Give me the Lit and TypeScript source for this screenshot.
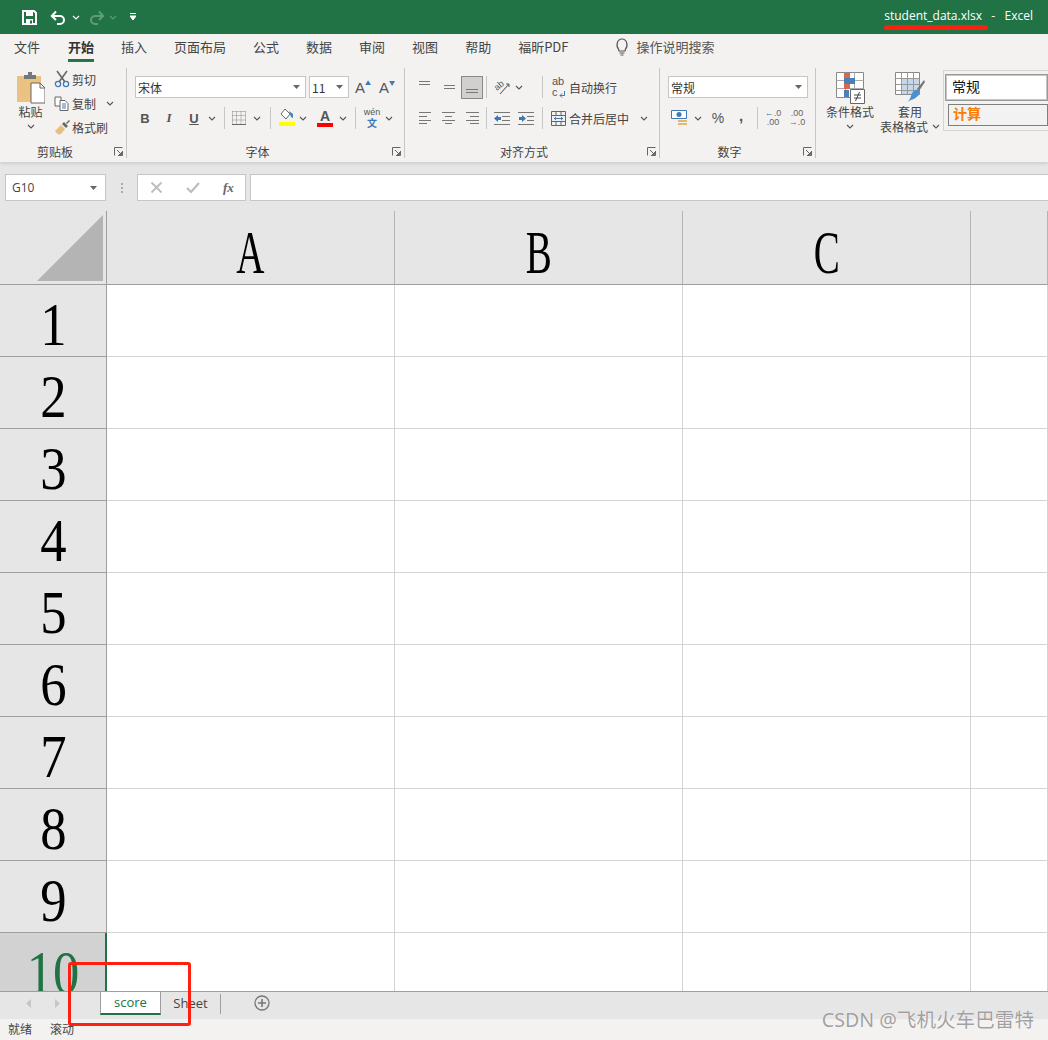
import { LitElement, html, css, svg } from "lit";
import { customElement } from "lit/decorators.js";

const ic = (w: number, h: number, body: unknown) =>
  html`<svg class="ic" width=${w} height=${h} viewBox="0 0 ${w} ${h}">${body}</svg>`;
const chev = ic(8, 5, svg`<path d="M1 1l3 3 3-3" fill="none" stroke="#555" stroke-width="1.1"/>`);
const caret = ic(7, 4, svg`<path d="M0 0h7L3.500 4z" fill="#666"/>`);
const launcher = ic(9, 9, svg`<path d="M.5 8.500V.5h8M8.500 4v4.500H4M3 3l4.500 4.500M7.500 5v2.500H5" fill="none" stroke="#666" stroke-width="1"/>`);
const lines = (ys: [number, number, number][]) =>
  ic(16, 16, ys.map(([y, a, b]) => svg`<path d="M${a} ${y + .5}H${b}" stroke="#777" stroke-width="1"/>`));

const icons = {
  save: ic(15, 15, svg`<path d="M1 1h11l2 2v11H1z" fill="none" stroke="#fff" stroke-width="2"/><path d="M4 1h7v5H4zM4 9h7v5H4z" fill="#fff"/><path d="M8 10.500h2v3H8z" fill="#217346"/>`),
  undo: ic(16, 15, svg`<path d="M3 6h7a4 4 0 0 1 0 8H7M6 1.500L1.800 6 6 10" fill="none" stroke="#fff" stroke-width="2"/>`),
  redo: ic(16, 15, svg`<path d="M13 6H6a4 4 0 0 0 0 8h3M10 1.500L14.200 6 10 10" fill="none" stroke="#5e9c7c" stroke-width="2"/>`),
  cut: ic(16, 18, svg`<path d="M3 1l8 11M13 1L5 12" stroke="#666" stroke-width="1.600"/><circle cx="4" cy="14" r="2.600" fill="none" stroke="#3f79b5" stroke-width="1.300"/><circle cx="12" cy="14" r="2.600" fill="none" stroke="#3f79b5" stroke-width="1.300"/>`),
  copy: ic(16, 15, svg`<path d="M1 1h6v9H1z" fill="#fff" stroke="#666"/><path d="M6 4.500h5l3 3v7H6z" fill="#fff" stroke="#666"/><path d="M8 8h4M8 10h4M8 12h4" stroke="#3f79b5"/>`),
  brush: ic(17, 15, svg`<path d="M1 11l6-6 4 4-4 5-3 .5z" fill="#e6c07e"/><path d="M8 4l2-2 4 4-2 2z" fill="#666"/><path d="M12 3l3-3 1 1-3 3z" fill="#666"/>`),
  borders: ic(14, 14, svg`<path d="M.5.500h13M.5 4.500h13M.5 9h13M.5 13.500h13M.5.500v13M4.500.5v13M9 .5v13M13.500.5v13" fill="none" stroke="#888" stroke-dasharray="1 1"/><path d="M0 13.500h14" stroke="#666"/>`),
  fill: ic(18, 20, svg`<path d="M7 1l5 5-4 5-5-5z" fill="#fff" stroke="#666"/><path d="M11 3l4 3v4l-2-1z" fill="#4a7fb8"/><path d="M1 14h16v4H1z" fill="#ff0"/>`),
  bulb: ic(14, 18, svg`<path d="M3.500 11C1 8.500 1.500 1 7 1s6 7.500 3.500 10l-.5 2H4z" fill="none" stroke="#555" stroke-width="1.200"/><path d="M4.500 15h5M5.500 17h3" stroke="#555"/>`),
  orient: ic(18, 16, svg`<text x="4" y="12" transform="rotate(-40 4 12)" font-family="Liberation Sans" font-size="9" fill="#555">ab</text><path d="M7 15L16 5M16 5h-3M16 5v3" fill="none" stroke="#666" stroke-width="1.100"/>`),
  indL: ic(16, 13, svg`<path d="M0 .5h16M8 4.500h8M8 8.500h8M0 12.500h16" stroke="#777"/><path d="M0 6.500L4 3v2h3v3H4v2z" fill="#3f79b5"/>`),
  indR: ic(16, 13, svg`<path d="M0 .5h16M9 4.500h7M9 8.500h7M0 12.500h16" stroke="#777"/><path d="M8 6.500L4 3v2H1v3h3v2z" fill="#3f79b5"/>`),
  wrap: ic(7, 7, svg`<path d="M5.500 0v4.500H1M3 2.500L1 4.500l2 2" fill="none" stroke="#3f79b5"/>`),
  merge: ic(15, 15, svg`<path d="M.5.500h14v14H.5zM.5 4.500h14M.5 10.500h14M5 .5v4M10 .5v4M5 10.500v4M10 10.500v4" fill="none" stroke="#666"/><path d="M3 7.500h9" stroke="#3f79b5"/><path d="M3 7.500l2-2v4zM12 7.500l-2-2v4z" fill="#3f79b5"/>`),
  money: ic(18, 17, svg`<path d="M.5.500h15v8H.5z" fill="#fff" stroke="#3f79b5"/><circle cx="8" cy="4.500" r="2.500" fill="#3f79b5"/><path d="M7 10h9v2H7zM7 13h9v2H7z" fill="#e6b86e"/>`),
  cond: ic(29, 33, svg`<path d="M.5.500h27v25H.5z" fill="#fff" stroke="#888"/><path d="M.5 8.500h27M.5 16.500h27M9.500.5v25M18.500.5v25" stroke="#aaa"/><path d="M8 1h6v5H8zM8 12h6v5H8z" fill="#d9694a"/><path d="M8 6h11v6H8zM8 18h5v7H8z" fill="#4a7fb8"/><path d="M14.500 17.500h14v14h-14z" fill="#fff" stroke="#666"/><path d="M18 23h7M18 26h7M23.500 20l-4 9" fill="none" stroke="#444"/>`),
  table: ic(30, 33, svg`<path d="M.5.500h24v22H.5z" fill="#fff" stroke="#888"/><path d="M6 7h18v15H6z" fill="#c5d7eb"/><path d="M.5 6.500h24M.5 12.500h24M.5 18.500h24M6.500.5v22M12.500.5v22M18.500.5v22" stroke="#999"/><path d="M29 8l-7 9 2 2 6-9z" fill="#777"/><path d="M16 24c1-5 6-8 8-5s-2 7-8 9l-4 2c2-1 3-3 4-6z" fill="#4a90d0"/>`),
  paste: ic(28, 32, svg`<path d="M0 4h24v26H0z" fill="#eac382"/><path d="M7 3h4V0h4v3h4v4H7z" fill="#777"/><path d="M14 11h9l5 5v15H14z" fill="#fff" stroke="#666"/><path d="M23 11v5h5" fill="none" stroke="#666"/>`),
  x: ic(13, 13, svg`<path d="M1.500 1.500l10 10M11.500 1.500l-10 10" stroke="#bdbdbd" stroke-width="1.800"/>`),
  check: ic(14, 13, svg`<path d="M1 7l4 4 8-9" fill="none" stroke="#bdbdbd" stroke-width="2.200"/>`),
  plus: ic(16, 16, svg`<circle cx="8" cy="8" r="7" fill="none" stroke="#777" stroke-width="1.300"/><path d="M8 4v8M4 8h8" stroke="#777" stroke-width="1.600"/>`),
  qat: ic(6, 8, svg`<path d="M0 .5h6M0 3h6L3 7z" stroke="#fff" fill="#fff" stroke-width="1"/>`),
  navL: ic(6, 9, svg`<path d="M5 0v9L0 4.500z" fill="#c6c6c6"/>`),
  navR: ic(6, 9, svg`<path d="M0 0v9l5-4.500z" fill="#c6c6c6"/>`),
};

const T = (s: string, cls = "") => html`<span class=${cls}>${s}</span>`;
type Cell = [number, unknown?];
const row = (cells: Cell[]) => html`<div class="row">${cells.map(([w, c]) =>
  html`<div class="cell" style=${`width:${w}px`}>${c ?? ""}</div>`)}</div>`;
const vsep = html`<i class="vsep"></i>`;

@customElement("app-root")
export class AppRoot extends LitElement {
  static styles = css`
    :host { display: flex; flex-direction: column; width: 1048px; height: 1040px; overflow: hidden; position: relative;
      font-family: "Noto Sans CJK SC", "Noto Sans", sans-serif; font-size: 12px; color: #444; background: #e6e6e6; }
    .ic { display: block; flex: none; }
    .title { height: 34px; flex: none; background: #217346; color: #fff; display: flex; align-items: center; box-sizing: border-box; padding-left: 22px; }
    .qat { display: flex; align-items: center; }
    .undo { margin-left: 13px; } .redo { margin-left: 9px; } .qatc { margin-left: 13px; }
    .wchev { margin-left: 6px; }
    .redo .wchev { margin-left: 4px; }
    .wchev path { stroke: #fff; } .dchev path { stroke: #5e9c7c; }
    .fname { margin-left: auto; font: 12px "Open Sans", sans-serif; color: #fff; white-space: pre; padding: 0 15px 4px 0; }
    .tabs { height: 28px; flex: none; background: #f3f2f1; display: flex; gap: 27px; padding-left: 14px; align-items: stretch; font-size: 13px; }
    .tab { display: flex; align-items: center; line-height: 1; color: #444; border-bottom: 3px solid transparent; box-sizing: border-box; }
    .tab.on { font-weight: 700; border-bottom-color: #217346; color: #333; margin-left: 1px; }
    .search { display: flex; align-items: center; gap: 8px; margin-left: 19px; color: #555; padding-bottom: 3px; }
    .ribbon { height: 100px; flex: none; background: #f3f2f1; display: flex; padding-top: 6px; box-sizing: border-box; box-shadow: 0 2px 3px #cfcfcf; position: relative; z-index: 1; }
    .group { display: flex; flex-direction: column; border-right: 1px solid #c6c6c6; height: 90px; box-sizing: border-box; flex: none; }
    .g1 { width: 127px; } .g2 { width: 278px; } .g3 { width: 255px; } .g4 { width: 156px; }
    .g5 { border: 0; flex: 1; min-width: 0; }
    .gbody { height: 76px; display: flex; flex: none; }
    .gfoot { display: flex; align-items: center; height: 15px; }
    .gfoot span { flex: 1; text-align: center; padding-right: 4px; }
    .gfoot .ic { margin-right: 3px; }
    .paste { width: 54px; padding-left: 7px; box-sizing: border-box; display: flex; flex-direction: column; align-items: center; padding-top: 4px; }
    .paste span { line-height: 16px; }
    .paste .ic:last-child { margin-top: 4px; }
    .smalls { display: flex; flex-direction: column; margin-top: -1px; }
    .sm { height: 24px; display: flex; align-items: center; width: 72px; }
    .sm .lead { width: 18px; flex: none; }
    .sm > .ic { margin-left: 2px; }
    .rows { display: flex; flex-direction: column; padding-top: 8px; gap: 9px; width: 100%; }
    .row { display: flex; align-items: center; height: 22px; }
    .cell { display: flex; align-items: center; justify-content: center; flex: none; height: 100%; white-space: nowrap; }
    .vsep { display: block; width: 1px; height: 22px; background: #c6c6c6; }
    .combo { background: #fff; border: 1px solid #c6c6c6; box-sizing: border-box; height: 22px; display: flex; align-items: center; justify-content: space-between; padding: 0 5px 0 2px; width: 100%; color: #333; }
    .b { font: 700 13px "Liberation Sans", sans-serif; color: #555; }
    .i { font: italic 700 13px "Liberation Serif", serif; color: #555; }
    .u { font: 700 13px "Liberation Sans", sans-serif; color: #555; text-decoration: underline; }
    .a-big { font: 15px "Liberation Sans", sans-serif; color: #555; }
    .a-up { display: flex; align-items: flex-start; }
    .tri { color: #3f79b5; font-size: 6px; line-height: 8px; }
    .fonta { display: flex; flex-direction: column; align-items: center; font: 700 14px/13px "Liberation Sans", sans-serif; color: #555; }
    .fonta i { display: block; width: 16px; height: 4px; background: #f00; }
    .wen { display: flex; flex-direction: column; align-items: center; font: 9px/10px "Liberation Sans", sans-serif; color: #555; }
    .wen b { font: 700 10px/12px "Noto Sans CJK SC", sans-serif; color: #3f79b5; }
    .sel { width: 22px; height: 23px; background: #d2d0ce; border: 1px solid #8a8886; box-sizing: border-box; display: flex; align-items: center; justify-content: center; }
    .num { font: 14px "Liberation Sans", sans-serif; color: #555; }
    .comma { font: 700 15px "Liberation Sans", sans-serif; color: #555; transform: translateY(-3px); }
    .dec { display: flex; flex-direction: column; font: 9px/9px "Liberation Sans", sans-serif; color: #666; align-items: center; }
    .dec em { font-style: normal; color: #3f79b5; }
    .wrap { display: flex; flex-direction: column; font: 11px/11px "Liberation Sans", sans-serif; color: #555; width: 14px; }
    .wrapc { display: flex; align-items: flex-end; gap: 1px; }
    .wrap-l { color: #444; }
    .fmtbtn { display: flex; flex-direction: column; align-items: center; padding-top: 4px; box-sizing: border-box; line-height: 15px; text-align: center; }
    .fmtbtn .t { margin-top: -1px; }
    .lab { display: inline-flex; align-items: center; gap: 4px; }
    .fmt-c { margin-left: 5px; width: 58px; } .fmt-t { width: 62px; }
    .chev-c { margin-top: 5px; }
    .gallery { margin-left: 2px; margin-top: 2px; height: 61px; flex: 1; background: #f3f2f1; border: 1px solid #d4d4d4; border-right: 0; box-sizing: border-box; padding: 3px 0 0 1px; display: flex; flex-direction: column; gap: 3px; overflow: hidden; }
    .st1 { height: 27px; background: #fff; border: 2px solid #c6c6c6; outline: 1px solid #999; outline-offset: -1px; box-sizing: border-box; display: flex; align-items: center; padding: 0 0 3px 5px; font-size: 14px; color: #111; }
    .st2 { height: 22px; margin-left: 3px; background: #f2f2f2; border: 1px solid #7f7f7f; box-sizing: border-box; display: flex; align-items: center; padding: 0 0 4px 4px; font-size: 14px; font-weight: 700; color: #fa7d00; }
    .fbar { height: 49px; flex: none; display: flex; align-items: flex-start; padding-top: 12px; box-sizing: border-box; background: #e6e6e6; }
    .namebox { width: 101px; height: 27px; margin-left: 5px; background: #fff; border: 1px solid #c6c6c6; box-sizing: border-box; display: flex; align-items: center; justify-content: space-between; padding: 0 8px 0 6px; font: 12px "Open Sans", sans-serif; color: #444; flex: none; }
    .dots { width: 2px; margin: 9px 14px 0 15px; height: 10px; flex: none; background: repeating-linear-gradient(#aaa 0 2px, transparent 2px 4px); }
    .fx { width: 109px; height: 27px; flex: none; background: #fff; border: 1px solid #c6c6c6; box-sizing: border-box; display: flex; align-items: center; gap: 23px; padding-left: 12px; }
    .fxt { font: italic 700 13px "Liberation Serif", serif; color: #666; }
    .finput { flex: 1; height: 27px; margin-left: 4px; background: #fff; border: 1px solid #c6c6c6; border-right: 0; box-sizing: border-box; }
    .sheet { flex: 1; min-height: 0; overflow: hidden; display: grid; grid-template-columns: 107px 288px 288px 288px 1fr; grid-template-rows: 74px; grid-auto-rows: 72px; background: #fff; }
    .corner { background: #e6e6e6; border-right: 1px solid #9e9e9e; border-bottom: 1px solid #9e9e9e; box-sizing: border-box; display: flex; align-items: flex-end; justify-content: flex-end; padding: 0 3px 3px 0; }
    .ch, .rh { background: #e6e6e6; display: flex; align-items: center; justify-content: center; overflow: hidden; box-sizing: border-box; color: #000; font: 62px/1 "Liberation Serif", serif; }
    .ch { border-right: 1px solid #b5b5b5; border-bottom: 1px solid #9e9e9e; padding-top: 9px; }
    .ch span { display: block; transform: scale(.63, 1); }
    .rh { border-right: 1px solid #9e9e9e; border-bottom: 1px solid #9e9e9e; padding-top: 6px; }
    .rh span { display: block; transform: scale(.85, 1); }
    .rh.act { background: #d2d2d2; color: #217346; border-right: 2px solid #217346; border-bottom: 0; }
    .c { border-right: 1px solid #d4d4d4; border-bottom: 1px solid #d4d4d4; box-sizing: border-box; }
    .sbar { height: 28px; flex: none; background: #e6e6e6; border-top: 1px solid #9e9e9e; box-sizing: border-box; display: flex; align-items: flex-start; font: 13px "Open Sans", sans-serif; }
    .nav { display: flex; align-items: flex-start; gap: 23px; padding: 7px 0 0 26px; width: 100px; box-sizing: border-box; flex: none; height: 100%; }
    .stab { height: 23px; display: flex; align-items: center; justify-content: center; box-sizing: border-box; flex: none; }
    .stab.on { width: 61px; background: #fff; color: #217346; border: 1px solid #9e9e9e; border-top: 0; border-bottom: 2px solid #217346; padding-bottom: 2px; }
    .stab.off { width: 60px; color: #444; border-right: 1px solid #9e9e9e; height: 20px; margin-top: 2px; padding-bottom: 3px; }
    .addt { margin: 3px 0 0 33px; }
    .status { height: 21px; flex: none; background: #f3f2f1; display: flex; align-items: center; gap: 18px; padding: 0 0 2px 8px; box-sizing: border-box; color: #444; }
    .ann1 { position: absolute; left: 884px; top: 25px; width: 104px; height: 5px; border-radius: 3px; background: #ff2012; }
    .ann2 { position: absolute; left: 68px; top: 962px; width: 123px; height: 64px; box-sizing: border-box; border: 3px solid #ff2012; border-radius: 3px; }
    .mark { position: absolute; right: 14px; top: 1005px; font: 19.600px/30px "Noto Sans", "Noto Sans CJK SC", sans-serif; color: rgba(130,130,130,.75); text-shadow: 0 0 1px #fff; }
  `;

  render() {
    const tabs = ["文件", "开始", "插入", "页面布局", "公式", "数据", "审阅", "视图", "帮助", "福昕PDF"];
    const rows = [1, 2, 3, 4, 5, 6, 7, 8, 9, 10];
    return html`
      <div class="title">
        <div class="qat">${icons.save}
          <div class="undo">${icons.undo}</div><div class="wchev">${chev}</div>
          <div class="redo dchev qat">${icons.redo}<div class="wchev">${chev}</div></div>
          <div class="qatc">${icons.qat}</div>
        </div>
        <div class="fname">student_data.xlsx   -   Excel</div>
      </div>
      <div class="tabs">
        ${tabs.map((t, i) => html`<div class="tab ${i === 1 ? "on" : ""}">${t}</div>`)}
        <div class="search">${icons.bulb}<span>操作说明搜索</span></div>
      </div>
      <div class="ribbon">
        <div class="group g1">
          <div class="gbody">
            <div class="paste">${icons.paste}<span>粘贴</span>${chev}</div>
            <div class="smalls">
              <div class="sm"><div class="lead">${icons.cut}</div>剪切</div>
              <div class="sm"><div class="lead">${icons.copy}</div>复制&nbsp;&nbsp;&nbsp;${chev}</div>
              <div class="sm"><div class="lead">${icons.brush}</div>格式刷</div>
            </div>
          </div>
          <div class="gfoot"><span>剪贴板</span>${launcher}</div>
        </div>
        <div class="group g2">
          <div class="gbody"><div class="rows">
            ${row([[8], [171, html`<div class="combo">宋体${caret}</div>`], [3], [40, html`<div class="combo">11${caret}</div>`],
              [2], [24, html`<div class="a-up"><span class="a-big">A</span><span class="tri">▲</span></div>`], [24, html`<div class="a-up"><span class="a-big">A</span><span class="tri">▼</span></div>`]])}
            ${row([[8], [20, T("B", "b")], [28, T("I", "i")], [22, T("U", "u")], [14, chev], [5], [1, vsep], [27, icons.borders], [10, chev], [8], [1, vsep], [5], [21, icons.fill], [12, chev], [6], [20, html`<div class="fonta">A<i></i></div>`], [2], [12, chev], [6], [1, vsep], [5], [22, html`<div class="wen">wén<b>文</b></div>`], [12, chev]])}
          </div></div>
          <div class="gfoot"><span>字体</span>${launcher}</div>
        </div>
        <div class="group g3">
          <div class="gbody"><div class="rows">
            ${row([[7], [24, lines([[2,3,14],[5,3,14]])], [25, lines([[6,3,14],[9,3,14]])], [22, html`<div class="sel">${lines([[10,2,14],[13,2,14]])}</div>`], [3], [1, vsep], [4], [22, icons.orient], [12, chev], [17], [1, vsep], [9], [14, html`<div class="wrap"><span>ab</span><span class="wrapc">c${icons.wrap}</span></div>`], [2], [50, T("自动换行", "wrap-l")]])}
            ${row([[7], [24, lines([[2,3,15],[6,3,11],[10,3,15],[13,3,11]])], [24, lines([[2,2,15],[6,5,12],[10,2,15],[13,5,12]])], [24, lines([[2,2,15],[6,6,15],[10,2,15],[13,6,15]])], [2], [1, vsep], [4], [22, icons.indL], [2], [22, icons.indR], [5], [1, vsep], [7], [16, icons.merge], [2], [62, T("合并后居中", "wrap-l")], [9], [10, chev]])}
          </div></div>
          <div class="gfoot"><span>对齐方式</span>${launcher}</div>
        </div>
        <div class="group g4">
          <div class="gbody"><div class="rows">
            ${row([[8], [140, html`<div class="combo">常规${caret}</div>`]])}
            ${row([[9], [22, icons.money], [14, chev], [4], [18, T("%", "num")], [28, T(",", "comma")], [2], [1, vsep], [5], [20, html`<div class="dec"><span><em>←</em>.0</span><span>.00</span></div>`], [4], [20, html`<div class="dec"><span>.00</span><span><em>→</em>.0</span></div>`]])}
          </div></div>
          <div class="gfoot"><span>数字</span>${launcher}</div>
        </div>
        <div class="group g5">
          <div class="gbody">
            <div class="fmtbtn fmt-c">${icons.cond}<div class="t">条件格式</div><div class="chev-c">${chev}</div></div>
            <div class="fmtbtn fmt-t">${icons.table}<div class="t">套用</div><div class="lab">表格格式${chev}</div></div>
            <div class="gallery"><div class="st1">常规</div><div class="st2">计算</div></div>
          </div>
        </div>
      </div>
      <div class="fbar">
        <div class="namebox">G10${caret}</div>
        <div class="dots"></div>
        <div class="fx">${icons.x}${icons.check}<span class="fxt">fx</span></div>
        <div class="finput"></div>
      </div>
      <div class="sheet">
        <div class="corner">${ic(66, 66, svg`<path d="M66 0v66H0z" fill="#b4b4b4"/>`)}</div>
        ${["A", "B", "C"].map((c) => html`<div class="ch"><span>${c}</span></div>`)}
        <div class="ch"></div>
        ${rows.map((r) => html`
          <div class="rh ${r === 10 ? "act" : ""}"><span>${r}</span></div>
          <div class="c"></div><div class="c"></div><div class="c"></div><div class="c"></div>`)}
      </div>
      <div class="sbar">
        <div class="nav">${icons.navL}${icons.navR}</div>
        <div class="stab on">score</div>
        <div class="stab off">Sheet</div>
        <div class="addt">${icons.plus}</div>
      </div>
      <div class="status"><span>就绪</span><span>滚动</span></div>
      <div class="ann1"></div>
      <div class="ann2"></div>
      <div class="mark">CSDN @飞机火车巴雷特</div>
    `;
  }
}
